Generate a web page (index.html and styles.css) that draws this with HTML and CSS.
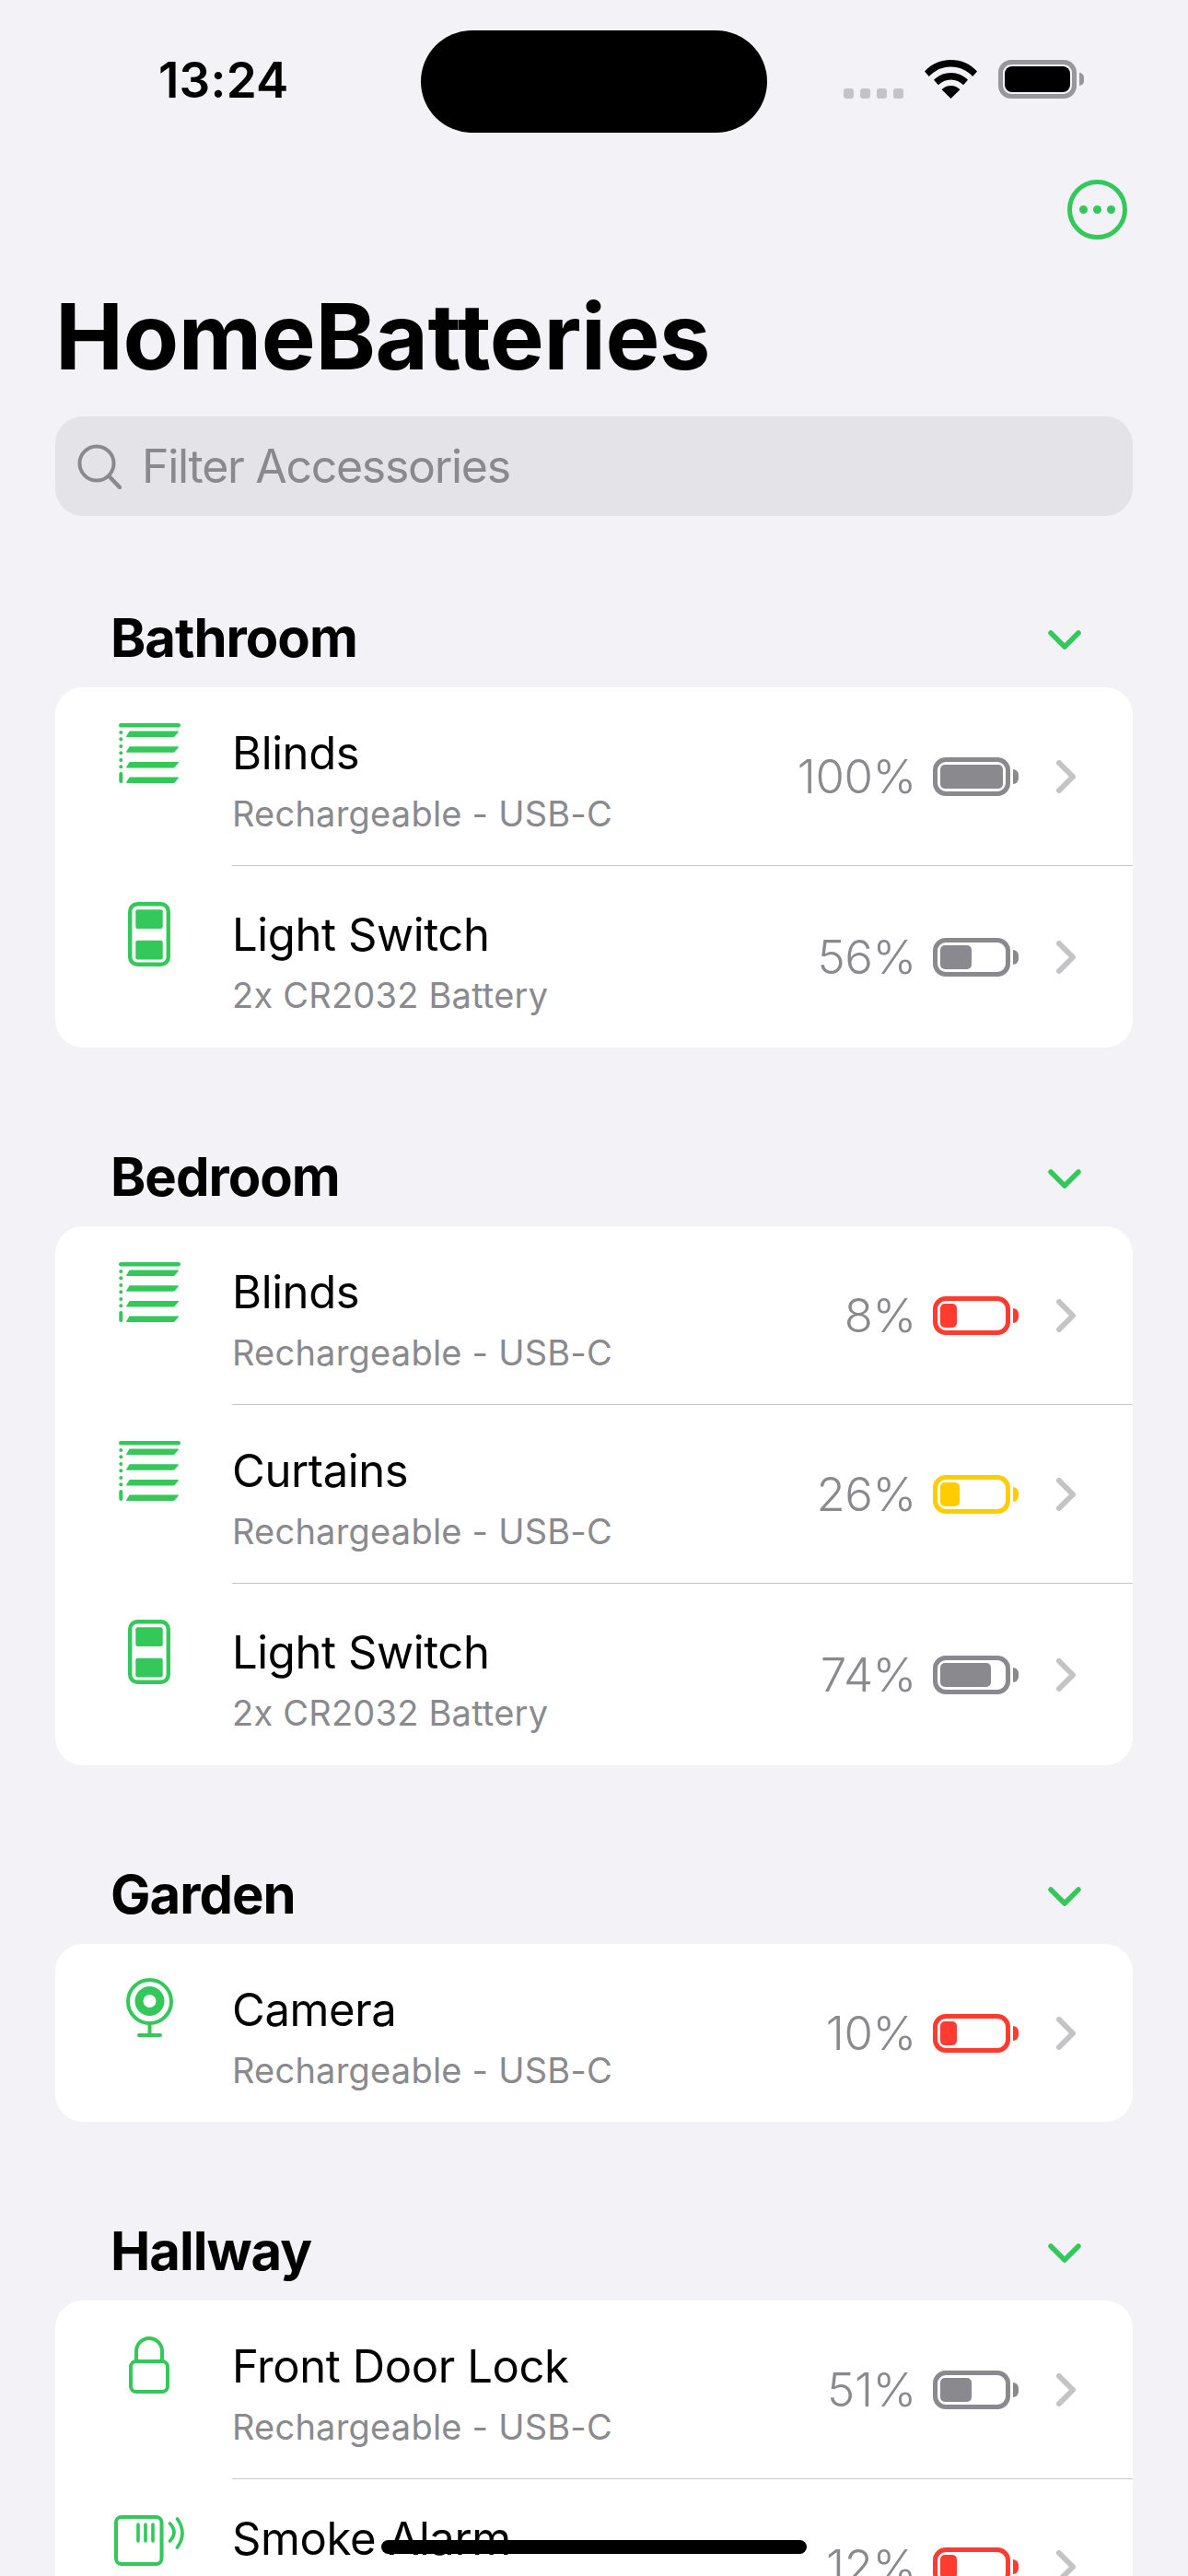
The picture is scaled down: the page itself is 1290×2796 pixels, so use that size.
FILE: index.html
```html
<!DOCTYPE html>
<html lang="en">
<head>
<meta charset="utf-8">
<title>HomeBatteries</title>
<link rel="stylesheet" href="styles.css">
</head>
<body>
<svg class="defs" width="0" height="0" aria-hidden="true">
  <symbol id="i-blinds" viewBox="0 0 67 65">
    <rect x="0" y="0" width="67" height="4.500" rx="2.200"/>
    <path d="M12 8.500h52q1.500 0 .8 1L61 14q-.7 1-2 1H9q-1.500 0-.8-1L11 9.500q.5-1 1-1z"/>
    <path d="M12 25.300h52q1.500 0 .8 1L61 30.800q-.7 1-2 1H9q-1.500 0-.8-1L11 26.300q.5-1 1-1z"/>
    <path d="M12 42h52q1.500 0 .8 1L61 47.500q-.7 1-2 1H9q-1.500 0-.8-1L11 43q.5-1 1-1z"/>
    <path d="M12 58.500h52q1.500 0 .8 1L61 64q-.7 1-2 1H9q-1.500 0-.8-1L11 59.500q.5-1 1-1z"/>
    <circle cx="2.300" cy="10" r="2"/><circle cx="2.300" cy="17.300" r="2"/><circle cx="2.300" cy="25" r="2"/>
    <circle cx="2.300" cy="32.300" r="2"/><circle cx="2.300" cy="40" r="2"/><circle cx="2.300" cy="47.300" r="2"/>
    <rect x="0.300" y="53" width="4" height="12" rx="2"/>
  </symbol>
  <symbol id="i-switch" viewBox="0 0 46 70">
    <rect x="2.200" y="2.200" width="41.600" height="65.600" rx="8" fill="none" stroke="currentColor" stroke-width="4.400"/>
    <rect x="8.300" y="8.300" width="29.400" height="20.700" rx="2"/>
    <rect x="8.300" y="41.700" width="29.400" height="20.700" rx="2"/>
  </symbol>
  <symbol id="i-camera" viewBox="0 0 51 64">
    <circle cx="25.500" cy="25.500" r="23.500" fill="none" stroke="currentColor" stroke-width="4"/>
    <circle cx="25.500" cy="25" r="11.500" fill="none" stroke="currentColor" stroke-width="9"/>
    <path d="M25.500 49v13M14 62h23" fill="none" stroke="currentColor" stroke-width="4" stroke-linecap="round"/>
  </symbol>
  <symbol id="i-lock" viewBox="0 0 44 62">
    <rect x="2" y="27" width="40" height="33" rx="6" fill="none" stroke="currentColor" stroke-width="4"/>
    <path d="M8 27V16a14 14 0 0 1 28 0v11" fill="none" stroke="currentColor" stroke-width="4"/>
  </symbol>
  <symbol id="i-smoke" viewBox="0 0 76 55">
    <rect x="2" y="2" width="49.500" height="51" rx="6" fill="none" stroke="currentColor" stroke-width="4"/>
    <path d="M26 10v18M34 10v18M42 10v18" fill="none" stroke="currentColor" stroke-width="3.600" stroke-linecap="round"/>
    <path d="M60.500 9q9 9.500 0 19M68.500 4q11 15.500 0 31" fill="none" stroke="currentColor" stroke-width="3.600" stroke-linecap="round"/>
  </symbol>
  <symbol id="i-chev-right" viewBox="0 0 21 36">
    <path d="M3 3l15 15L3 33" fill="none" stroke="currentColor" stroke-width="6" stroke-linecap="round" stroke-linejoin="round"/>
  </symbol>
  <symbol id="i-chev-down" viewBox="0 0 36 22">
    <path d="M3 3l15 15L33 3" fill="none" stroke="currentColor" stroke-width="5.500" stroke-linecap="round" stroke-linejoin="round"/>
  </symbol>
</svg>

<div class="island"></div>
<div class="home-indicator"></div>

<header class="status">
  <span class="time">13:24</span>
  <div class="status-right">
    <div class="signal"><i></i><i></i><i></i><i></i></div>
    <svg class="wifi" viewBox="0 0 57 42"><path d="M28.500 0C40 0 50 4.500 57 12.500l-4.800 5.400C46 11.200 37.800 7.500 28.500 7.500S11 11.200 4.800 17.900L0 12.500C7 4.500 17 0 28.500 0zM28.500 14c7.300 0 13.800 2.900 18.500 7.800l-4.900 5.500c-3.500-3.700-8.300-5.900-13.600-5.900s-10.100 2.200-13.600 5.900L10 21.800C14.700 16.900 21.200 14 28.500 14zM28.500 28c3.900 0 7.400 1.600 9.900 4.200L28.500 42 18.600 32.200c2.500-2.600 6-4.200 9.900-4.200z"/></svg>
    <div class="sys-battery"><div class="sys-battery-fill"></div></div>
  </div>
</header>

<nav class="nav">
  <button class="more" type="button" aria-label="More"><i></i><i></i><i></i></button>
</nav>

<h1 class="title">HomeBatteries</h1>

<div class="search">
  <svg class="search-icon" viewBox="0 0 48 49"><circle cx="21" cy="21" r="18.500" fill="none" stroke="currentColor" stroke-width="4"/><path d="M34.500 35L46 47" fill="none" stroke="currentColor" stroke-width="4.500" stroke-linecap="round"/></svg>
  <span class="search-text">Filter Accessories</span>
</div>

<main>
  <section class="section">
    <div class="section-head"><h2>Bathroom</h2><svg class="chev-down"><use href="#i-chev-down"/></svg></div>
    <div class="card">
      <div class="row">
        <div class="row-icon"><svg class="ic-blinds"><use href="#i-blinds"/></svg></div>
        <div class="row-body">
          <div class="row-text"><div class="name">Blinds</div><div class="sub">Rechargeable - USB-C</div></div>
          <div class="pct">100%</div>
          <div class="battery"><div class="fill" style="width:68px"></div></div>
          <svg class="chev-right"><use href="#i-chev-right"/></svg>
        </div>
      </div>
      <div class="row">
        <div class="row-icon"><svg class="ic-switch"><use href="#i-switch"/></svg></div>
        <div class="row-body">
          <div class="row-text"><div class="name">Light Switch</div><div class="sub">2x CR2032 Battery</div></div>
          <div class="pct">56%</div>
          <div class="battery"><div class="fill" style="width:34px"></div></div>
          <svg class="chev-right"><use href="#i-chev-right"/></svg>
        </div>
      </div>
    </div>
  </section>

  <section class="section">
    <div class="section-head"><h2>Bedroom</h2><svg class="chev-down"><use href="#i-chev-down"/></svg></div>
    <div class="card">
      <div class="row">
        <div class="row-icon"><svg class="ic-blinds"><use href="#i-blinds"/></svg></div>
        <div class="row-body">
          <div class="row-text"><div class="name">Blinds</div><div class="sub">Rechargeable - USB-C</div></div>
          <div class="pct">8%</div>
          <div class="battery low"><div class="fill" style="width:18px"></div></div>
          <svg class="chev-right"><use href="#i-chev-right"/></svg>
        </div>
      </div>
      <div class="row">
        <div class="row-icon"><svg class="ic-blinds"><use href="#i-blinds"/></svg></div>
        <div class="row-body">
          <div class="row-text"><div class="name">Curtains</div><div class="sub">Rechargeable - USB-C</div></div>
          <div class="pct">26%</div>
          <div class="battery mid"><div class="fill" style="width:21px"></div></div>
          <svg class="chev-right"><use href="#i-chev-right"/></svg>
        </div>
      </div>
      <div class="row">
        <div class="row-icon"><svg class="ic-switch"><use href="#i-switch"/></svg></div>
        <div class="row-body">
          <div class="row-text"><div class="name">Light Switch</div><div class="sub">2x CR2032 Battery</div></div>
          <div class="pct">74%</div>
          <div class="battery"><div class="fill" style="width:55px"></div></div>
          <svg class="chev-right"><use href="#i-chev-right"/></svg>
        </div>
      </div>
    </div>
  </section>

  <section class="section">
    <div class="section-head"><h2>Garden</h2><svg class="chev-down"><use href="#i-chev-down"/></svg></div>
    <div class="card">
      <div class="row">
        <div class="row-icon"><svg class="ic-camera"><use href="#i-camera"/></svg></div>
        <div class="row-body">
          <div class="row-text"><div class="name">Camera</div><div class="sub">Rechargeable - USB-C</div></div>
          <div class="pct">10%</div>
          <div class="battery low"><div class="fill" style="width:18px"></div></div>
          <svg class="chev-right"><use href="#i-chev-right"/></svg>
        </div>
      </div>
    </div>
  </section>

  <section class="section">
    <div class="section-head"><h2>Hallway</h2><svg class="chev-down"><use href="#i-chev-down"/></svg></div>
    <div class="card">
      <div class="row">
        <div class="row-icon"><svg class="ic-lock"><use href="#i-lock"/></svg></div>
        <div class="row-body">
          <div class="row-text"><div class="name">Front Door Lock</div><div class="sub">Rechargeable - USB-C</div></div>
          <div class="pct">51%</div>
          <div class="battery"><div class="fill" style="width:34px"></div></div>
          <svg class="chev-right"><use href="#i-chev-right"/></svg>
        </div>
      </div>
      <div class="row row-tight">
        <div class="row-icon"><svg class="ic-smoke"><use href="#i-smoke"/></svg></div>
        <div class="row-body">
          <div class="row-text"><div class="name">Smoke Alarm</div></div>
          <div class="pct">12%</div>
          <div class="battery low"><div class="fill" style="width:18px"></div></div>
          <svg class="chev-right"><use href="#i-chev-right"/></svg>
        </div>
      </div>
    </div>
  </section>
</main>
</body>
</html>
```
FILE: styles.css
```css
* { box-sizing: border-box; }
html, body { margin: 0; padding: 0; }
body {
  position: relative;
  width: 1290px;
  height: 2796px;
  overflow: hidden;
  background: #f2f2f7;
  color: #000;
  font-family: Inter, "Liberation Sans", sans-serif;
}
.defs { position: absolute; }

.island {
  position: absolute;
  left: 457px;
  top: 33px;
  width: 376px;
  height: 111px;
  border-radius: 56px;
  background: #000;
}
.home-indicator {
  position: absolute;
  left: 414px;
  top: 2757px;
  width: 462px;
  height: 15px;
  border-radius: 8px;
  background: #000;
  z-index: 2;
}

.status {
  height: 150px;
  padding: 56px 121px 0 172px;
  display: flex;
  justify-content: space-between;
  align-items: flex-start;
}
.time { font-size: 53px; line-height: 62px; font-weight: 600; letter-spacing: 0.2px; }
.status-right { display: flex; align-items: flex-start; padding-top: 9px; }
.signal { display: flex; gap: 7px; margin-top: 31px; margin-right: 23px; }
.signal i { width: 11px; height: 11px; border-radius: 3px; background: #c4c4c8; }
.wifi { width: 57px; height: 42px; fill: #000; margin-right: 23px; }
.sys-battery {
  position: relative;
  width: 85px;
  height: 42px;
  border: 5px solid #98989c;
  border-radius: 14px;
  padding: 2px;
}
.sys-battery::after {
  content: "";
  position: absolute;
  right: -13px;
  top: 9px;
  width: 5px;
  height: 14px;
  border-radius: 0 7px 7px 0;
  background: #98989c;
}
.sys-battery-fill { height: 100%; border-radius: 8px; background: #000; }

.nav {
  margin-top: 45px;
  height: 65px;
  padding-right: 66px;
  display: flex;
  justify-content: flex-end;
}
.more {
  width: 65px;
  height: 65px;
  padding: 0;
  border: 5px solid #34c759;
  border-radius: 50%;
  background: none;
  display: flex;
  align-items: center;
  justify-content: center;
  gap: 6px;
}
.more i { width: 9px; height: 9px; border-radius: 50%; background: #34c759; }

.title {
  margin: 45px 0 0 60px;
  font-size: 99px;
  line-height: 120px;
  font-weight: 700;
  letter-spacing: -0.4px;
}

.search {
  margin: 27px 60px 0;
  height: 108px;
  border-radius: 30px;
  background: #e3e3e8;
  display: flex;
  align-items: center;
  padding-left: 24px;
  color: #8a8a8e;
}
.search-icon { width: 48px; height: 49px; margin-right: 22px; }
.search-text { font-size: 50px; letter-spacing: -1.3px; }

.section { margin: 110px 60px 0; }
.section:first-child { margin-top: 102px; }
.section-head {
  height: 60px;
  margin-bottom: 24px;
  padding: 0 56px 0 60px;
  display: flex;
  align-items: center;
  justify-content: space-between;
}
.section-head h2 {
  margin: 0;
  font-size: 58px;
  line-height: 60px;
  font-weight: 700;
  letter-spacing: -1px;
}
.chev-down { width: 36px; height: 22px; color: #34c759; margin-top: 6px; }

.card { background: #fff; border-radius: 30px; overflow: hidden; }
.row { display: flex; height: 194px; }
.row:last-child { height: 198px; }
.row:first-child { height: 193px; }
.row.row-tight { height: 190px; }
.row-icon {
  width: 192px;
  padding: 40px 0 0 12px;
  display: flex;
  justify-content: center;
  align-items: flex-start;
  color: #34c759;
  fill: #34c759;
}
.row:first-child .row-icon { padding-top: 39px; }
.row-body {
  flex: 1;
  display: flex;
  align-items: center;
  padding-right: 62px;
  border-top: 1px solid #c6c6c8;
}
.row:first-child .row-body { border-top: 0; }
.row-text { flex: 1; align-self: flex-start; padding-top: 42px; }
.row:last-child .row-text { padding-top: 45px; }
.row:first-child .row-text { padding-top: 42px; }
.row.row-tight .row-text { padding-top: 35px; }
.name { font-size: 49px; line-height: 60px; letter-spacing: -0.4px; }
.sub { margin-top: 11px; font-size: 38px; line-height: 48px; color: #8a8a8e; letter-spacing: 0.22px; }
.pct { font-size: 51px; font-weight: 300; color: #8a8a8e; margin-right: 18px; letter-spacing: -0.4px; }

.ic-blinds { width: 67px; height: 65px; }
.ic-switch { width: 46px; height: 70px; }
.ic-camera { width: 51px; height: 64px; margin-top: -2px; }
.ic-lock { width: 44px; height: 62px; }
.ic-smoke { width: 76px; height: 55px; }

.battery {
  position: relative;
  width: 84px;
  height: 42px;
  margin-right: 50px;
  padding: 3px;
  border: 5px solid #8a8a8e;
  border-radius: 14px;
  color: #8a8a8e;
}
.battery::after {
  content: "";
  position: absolute;
  right: -14px;
  top: 8px;
  width: 6px;
  height: 16px;
  border-radius: 0 8px 8px 0;
  background: currentColor;
}
.fill { height: 100%; border-radius: 5px; background: currentColor; }
.battery.low { border-color: #ff3b30; color: #ff3b30; }
.battery.mid { border-color: #ffcc00; color: #ffcc00; }
.chev-right { width: 21px; height: 36px; color: #c4c4c6; }
```
